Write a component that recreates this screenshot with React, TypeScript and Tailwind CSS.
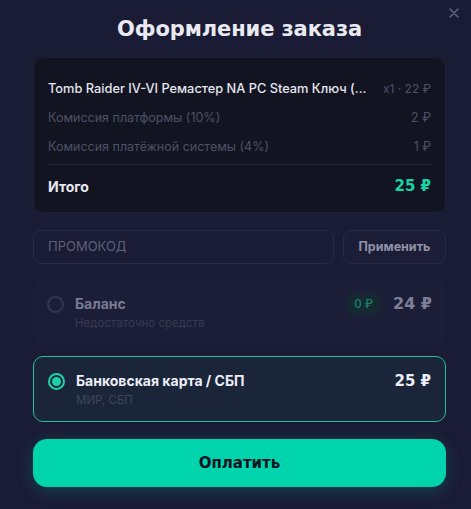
import React from "react";

const wide = { fontFamily: '"DejaVu Sans", "Noto Sans", sans-serif' };

export default function App() {
  return (
    <div
      className="w-[471px] h-[509px] bg-[#1a1b34] relative overflow-hidden"
      style={{ fontFamily: 'Inter, "Noto Sans", sans-serif' }}
    >
      <button className="absolute right-[10px] top-[6px] w-[14px] h-[14px] flex items-center justify-center text-[#5d6082]">
        <svg width="10" height="10" viewBox="0 0 10 10" fill="none" stroke="currentColor" strokeWidth="1.6" strokeLinecap="round">
          <path d="M1 1L9 9M9 1L1 9" />
        </svg>
      </button>
      <div className="flex flex-col px-[33px] pr-[25px]">
        <h1
          className="h-[57px] pt-[14px] text-center text-[21px] font-bold tracking-[-0.1px] text-[#e9e9f2] leading-[30px]"
          style={wide}
        >
          Оформление заказа
        </h1>
        <div className="rounded-[10px] bg-[#131421] border border-[#1f2133] px-[14px] pt-[21px] pb-[14px]">
          <div className="flex flex-col gap-[9px]">
            <div className="flex justify-between items-center h-[20px]">
              <span className="text-[12.8px] font-medium text-[#e4e5ee]">Tomb Raider IV-VI Ремастер NA PC Steam Ключ (...</span>
              <span className="text-[12px] text-[#4e5166]">x1 · 22 ₽</span>
            </div>
            <div className="flex justify-between items-center h-[20px] text-[12.5px] text-[#4e5166]">
              <span>Комиссия платформы (10%)</span>
              <span>2 ₽</span>
            </div>
            <div className="flex justify-between items-center h-[20px] text-[12.5px] text-[#4e5166]">
              <span>Комиссия платёжной системы (4%)</span>
              <span>1 ₽</span>
            </div>
          </div>
          <div className="mt-[7px] h-px bg-[#222437]" />
          <div className="flex justify-between items-center h-[24px] mt-[9px]">
            <span className="text-[14px] font-bold text-[#e9e9f2]">Итого</span>
            <span className="text-[15px] font-bold text-[#18d3a4]" style={wide}>25 ₽</span>
          </div>
        </div>
        <div className="flex gap-[9px] mt-[17px] h-[34px]">
          <div className="flex-1 rounded-[8px] border border-[#272a44] bg-[#1a1b34] flex items-center px-[14px] text-[13px] text-[#5d6078]">
            ПРОМОКОД
          </div>
          <button className="w-[103px] rounded-[8px] border border-[#272a44] bg-[#1c1d36] text-[12.5px] font-bold text-[#8f91a8]">
            Применить
          </button>
        </div>
        <div className="mt-[16px] h-[66px] rounded-[10px] bg-[#1d1f38] px-[14px] pt-[14px] flex items-start opacity-[0.85]">
          <div className="flex-1 flex items-start gap-[11px]">
            <div className="w-[17px] h-[17px] mt-[2px] rounded-full border-2 border-[#3a3c52]" />
            <div className="flex flex-col">
              <span className="text-[14px] font-bold text-[#8a8ca3] leading-[20px]">Баланс</span>
              <span className="text-[11.5px] text-[#3d4056] leading-[18px]">Недостаточно средств</span>
            </div>
          </div>
          <div className="flex items-center gap-[14px] h-[20px]">
            <span className="rounded-[5px] bg-[#142d30] px-[6px] text-[11.5px] font-medium text-[#139a7b] leading-[18px] shadow-[0_0_8px_rgba(20,60,55,0.8)]">0 ₽</span>
            <span className="text-[16px] font-bold text-[#8f91a8]" style={wide}>24 ₽</span>
          </div>
        </div>
        <div className="mt-[10px] h-[66px] rounded-[10px] bg-[#1a2539] border border-[#1fbf9c] px-[14px] pt-[14px] flex items-start">
          <div className="flex-1 flex items-start gap-[11px]">
            <div className="w-[17px] h-[17px] mt-[2px] rounded-full border-2 border-[#1ed3a8] flex items-center justify-center">
              <div className="w-[9px] h-[9px] rounded-full bg-[#1ed3a8]" />
            </div>
            <div className="flex flex-col">
              <span className="text-[14px] font-bold text-[#eceef5] leading-[20px]">Банковская карта / СБП</span>
              <span className="text-[11.5px] text-[#3f4559] leading-[18px]">МИР, СБП</span>
            </div>
          </div>
          <span className="text-[15px] font-bold text-[#eceef5] leading-[20px]" style={wide}>25 ₽</span>
        </div>
        <button
          className="mt-[17px] h-[48px] rounded-[14px] bg-[#00d4ac] text-[15px] font-bold text-[#0b1220] shadow-[0_4px_18px_rgba(0,212,172,0.22)]"
          style={wide}
        >
          Оплатить
        </button>
      </div>
    </div>
  );
}
